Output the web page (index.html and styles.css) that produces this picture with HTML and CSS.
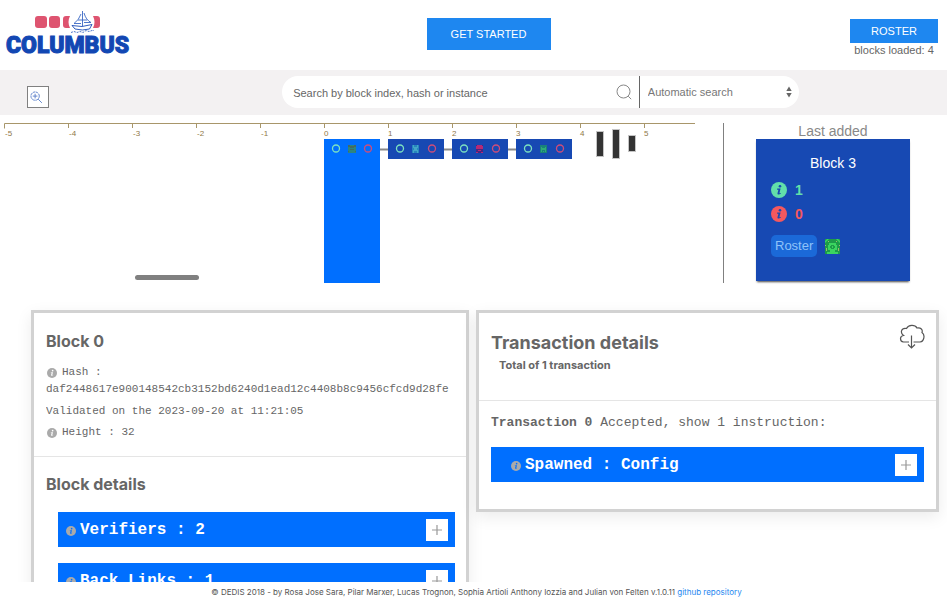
FILE: index.html
```html
<!DOCTYPE html>
<html lang="en">
<head>
<meta charset="utf-8">
<title>Columbus</title>
<link rel="stylesheet" href="styles.css">
</head>
<body>
<svg class="defs" aria-hidden="true">
  <symbol id="info" viewBox="0 0 16 16">
    <circle cx="8" cy="8" r="8" fill="currentColor"/>
    <circle class="info-mark" cx="9" cy="4.2" r="1.3"/>
    <path class="info-mark" d="M6.2 6.600h3.400l-1.200 4.700 1.500-.4-.2.8c-1 .7-3.600 1.300-3.200-.5l.9-3.500H6z"/>
  </symbol>
  <symbol id="plus" viewBox="0 0 12 12">
    <path d="M6 1v10M1 6h10" fill="none" stroke="currentColor" stroke-width="1.2"/>
  </symbol>
</svg>

<header class="topbar">
  <a class="logo" href="#" aria-label="Columbus">
    <svg class="logo-art" viewBox="0 0 120 24" aria-hidden="true">
      <g fill="#de5470">
        <rect x="29" y="6" width="12" height="12" rx="3"/>
        <rect x="43" y="6" width="11" height="12" rx="3"/>
        <path d="M64 6h-4q-3 0-3 3v6q0 3 3 3h4q-3-6 0-12z"/>
        <path d="M87 6h4q3 0 3 3v6q0 3-3 3h-4q3-6 0-12z"/>
      </g>
      <g fill="none" stroke="#3a68c4" stroke-width=".9">
        <path d="M76.500 1v15M75 4q-2 6-7 9.500h7M78 3q2 7 7 9.500h-7M72 10h9"/>
        <path d="M66 15.500q10 2.500 20-1l-2.500 4.500q-7 2-14.500 0z" stroke="#1a4bb5"/>
        <path d="M65 22.500l3-1 3 1 3-1 3 1 3-2 3 1 3-1 2 0" stroke-dasharray="2 1"/>
      </g>
    </svg>
    <span class="logo-text">COLUMBUS</span>
  </a>
  <button class="btn btn-start" type="button">GET STARTED</button>
  <div class="status">
    <button class="btn btn-roster" type="button">ROSTER</button>
    <span class="loaded">blocks loaded: 4</span>
  </div>
</header>

<section class="toolbar">
  <div class="tools">
    <button class="zoom-btn" type="button" aria-label="Zoom in">
      <svg viewBox="0 0 14 14" fill="none" stroke="#5b7fca">
        <circle cx="5.500" cy="5.500" r="4.500" stroke-dasharray="3 .6"/>
        <path d="M5.500 3v5M3 5.500h5M8.800 8.800l4 4"/>
      </svg>
    </button>
  </div>
  <form class="search">
    <input class="search-input" type="search" aria-label="Search" placeholder="Search by block index, hash or instance">
    <button class="search-btn" type="button" aria-label="Search">
      <svg viewBox="0 0 16 16" fill="none" stroke="#888">
        <circle cx="7.500" cy="7.500" r="6.500"/><path d="M12.200 12.200l3 3"/>
      </svg>
    </button>
    <div class="select-wrap">
      <select class="search-mode" aria-label="Search mode"><option>Automatic search</option></select>
      <svg class="arrows" viewBox="0 0 6 12" fill="#666" aria-hidden="true"><path d="M3 .5l2.700 4.500H.3zM3 11.500L.3 7h5.400z"/></svg>
    </div>
  </form>
</section>

<section class="chain">
  <div class="chart">
    <svg class="chart-svg" width="695" height="160" viewBox="0 0 695 160" role="img" aria-label="Block chain">
      <path class="axis" d="M4.500 5.500v-5H695M68.500 0v5M132.500 0v5M196.500 0v5M260.500 0v5M324.500 0v5M388.500 0v5M452.500 0v5M516.500 0v5M580.500 0v5M644.500 0v5"/>
      <g class="ticks">
        <text x="5" y="13">-5</text><text x="69" y="13">-4</text><text x="133" y="13">-3</text><text x="197" y="13">-2</text><text x="261" y="13">-1</text>
        <text x="324" y="13">0</text><text x="388" y="13">1</text><text x="452" y="13">2</text><text x="516" y="13">3</text><text x="580" y="13">4</text><text x="644" y="13">5</text>
      </g>
      <path d="M380 26.500h136" stroke="#888" stroke-width="2"/>
      <rect x="324" y="16" width="56" height="144" fill="#006fff"/>
      <g fill="#1749b3">
        <rect x="388" y="16" width="56" height="20"/><rect x="452" y="16" width="56" height="20"/><rect x="516" y="16" width="56" height="20"/>
      </g>
      <g fill="none" stroke="#7de3c0" stroke-width="1.300">
        <circle cx="336" cy="25.500" r="3.500"/><circle cx="400" cy="25.500" r="3.500"/><circle cx="464" cy="25.500" r="3.500"/><circle cx="528" cy="25.500" r="3.500"/>
      </g>
      <g fill="none" stroke="#cf4d79" stroke-width="1.300">
        <circle cx="368" cy="25.500" r="3.500"/><circle cx="432" cy="25.500" r="3.500"/><circle cx="496" cy="25.500" r="3.500"/><circle cx="560" cy="25.500" r="3.500"/>
      </g>
      <g>
        <rect x="348" y="22" width="8" height="8" fill="#2d867f"/>
        <path d="M348 22h2v1h4v-1h2v2h-2v1h-4v-1h-2zM350 26h4v1h-4zM348 28h1v1h-1zM355 28h1v1h-1z" fill="#456a63"/>
        <rect x="412" y="22" width="7" height="8" fill="#2785bd"/>
        <path d="M413 22h1v2h3v-2h1v3h-1v2h1v3h-1v-2h-3v2h-1v-3h1v-2h-1z" fill="#43a5c8"/>
        <rect x="476" y="22" width="7" height="8" fill="#4b257f"/>
        <path d="M477 22h5v1h1v3h-7v-3h1zM478 27h3v1h-3zM476 29h2v1h-2zM481 29h2v1h-2z" fill="#b52a75"/>
        <rect x="540" y="22" width="7" height="8" fill="#198278"/>
        <path d="M541 24h1v1h3v-1h1v5h-1v-2h-3v2h-1zM543 28h1v1h-1z" fill="#2fab78"/>
      </g>
      <g fill="#333" stroke="#c4c4c4">
        <rect x="596.500" y="8.500" width="7" height="25"/><rect x="612.500" y="6.500" width="7" height="29"/><rect x="628.500" y="12.500" width="7" height="16"/>
      </g>
      <rect x="135" y="152" width="64" height="5" rx="2.500" fill="#808080"/>
    </svg>
  </div>
  <aside class="last">
    <div class="last-label">Last added</div>
    <div class="last-card">
      <div class="last-title">Block 3</div>
      <div class="count accepted"><svg class="info-lg"><use href="#info"/></svg>1</div>
      <div class="count rejected"><svg class="info-lg"><use href="#info"/></svg>0</div>
      <div class="roster-row">
        <span class="roster-tag">Roster</span>
        <svg class="identicon" viewBox="0 0 15 15" aria-hidden="true">
          <rect width="15" height="15" fill="#1d9b48"/>
          <path d="M4 4h7v2h1v5h-2v2h3v2H2v-2h3v-2H3V6h1z" fill="#3bd45f"/>
          <path d="M6 6h3v1h1v2H9v1H6V9H5V7h1z" fill="#1d9b48"/><path d="M7 7h1v2H7z" fill="#3bd45f"/>
          <path d="M0 2l2-2h2L0 4zM15 2l-2-2h-2l4 4z" fill="#3bd45f"/>
          <path d="M3 2h1v1H3zM11 2h1v1h-1zM0 6h1v1H0zM14 6h1v1h-1zM1 9h1v3H1zM13 9h1v3h-1z" fill="#9cba6c"/>
        </svg>
      </div>
    </div>
  </aside>
</section>

<main class="panels">
  <article class="panel">
    <section class="summary">
      <h2 class="heading">Block 0</h2>
      <p class="line hash-label"><svg class="info-sm"><use href="#info"/></svg>Hash :</p>
      <p class="line hash">daf2448617e900148542cb3152bd6240d1ead12c4408b8c9456cfcd9d28fe</p>
      <p class="line">Validated on the 2023-09-20 at 11:21:05</p>
      <p class="line"><svg class="info-sm"><use href="#info"/></svg>Height : 32</p>
    </section>
    <section class="details">
      <h2 class="heading">Block details</h2>
      <div class="accordion">
        <div class="bar"><svg class="info-sm"><use href="#info"/></svg>Verifiers : 2<button class="expand" type="button" aria-label="Expand verifiers"><svg><use href="#plus"/></svg></button></div>
        <div class="bar"><svg class="info-sm"><use href="#info"/></svg>Back Links : 1<button class="expand" type="button" aria-label="Expand back links"><svg><use href="#plus"/></svg></button></div>
      </div>
    </section>
  </article>

  <article class="panel">
    <section class="tx-head">
      <div>
        <h2 class="heading heading-lg">Transaction details</h2>
        <p class="total">Total of 1 transaction</p>
      </div>
      <button class="download" type="button" aria-label="Download">
        <svg viewBox="0 0 26 26" fill="none" stroke="#555" stroke-width="1.200">
          <path d="M10 18H4.500C.5 17.500.5 12 4.500 11.500 1 9 2 3.500 7.500 4.500 9.500.5 16 .5 18 4c4-.5 6 1.500 5 4.500 3.500 2.500 2 9-2 9.500h-6.500"/>
          <path d="M12.500 11.500v12M9 20.500l3.500 3.500 3.500-3.500"/>
        </svg>
      </button>
    </section>
    <section class="tx-body">
      <p class="tx-line"><b>Transaction 0</b> Accepted, show 1 instruction:</p>
      <div class="bar bar-indent"><svg class="info-sm"><use href="#info"/></svg>Spawned : Config<button class="expand" type="button" aria-label="Expand instruction"><svg><use href="#plus"/></svg></button></div>
    </section>
  </article>
</main>

<footer class="footer">© DEDIS 2018 - by Rosa Jose Sara, Pilar Marxer, Lucas Trognon, Sophia Artioli Anthony Iozzia and Julian von Felten v.1.0.11 <a href="#">github repository</a></footer>
</body>
</html>
```
FILE: styles.css
```css
* { box-sizing: border-box; }

body {
  margin: 0;
  height: 100vh;
  display: flex;
  flex-direction: column;
  overflow: hidden;
  background: #fff;
  color: #666;
  font-family: "Liberation Sans", Arial, sans-serif;
}

h2, p { margin: 0; }
button { font: inherit; cursor: pointer; padding: 0; }
.defs { display: none; }

/* Header */
.topbar {
  flex: none;
  height: 70px;
  display: flex;
  justify-content: space-between;
  padding: 0 9px 0 6px;
}

.logo {
  display: flex;
  flex-direction: column;
  width: 121px;
  padding-top: 10px;
  color: #1247b3;
  text-decoration: none;
}
.logo-art { height: 24px; width: 120px; }
.logo-text {
  font: 900 23px/23px Roboto, sans-serif;
  -webkit-text-stroke: 1px #1247b3;
}

.btn {
  border: 0;
  background: #1e87f0;
  color: #fff;
  font-size: 11px;
}
.btn-start { width: 124px; height: 32px; margin-top: 18px; }
.btn-roster { width: 88px; height: 24px; }
.status {
  display: flex;
  flex-direction: column;
  align-items: center;
  padding-top: 19px;
}
.loaded { font-size: 11px; line-height: 14px; }

/* Search strip */
.toolbar {
  flex: none;
  height: 45px;
  display: grid;
  grid-template-columns: 19fr 35fr 10fr;
  background: #f3f1f2;
}
.tools { padding: 16px 0 0 27px; }
.zoom-btn {
  display: block;
  width: 22px;
  height: 22px;
  padding: 3px 2px;
  border: 1px solid #808080;
  background: #fff;
}
.zoom-btn svg { display: block; width: 13px; height: 13px; }

.search {
  display: flex;
  height: 32px;
  margin: 6px 0 0 1px;
  border-radius: 16px;
  background: #fff;
  overflow: hidden;
}
.search-input {
  flex: 1;
  min-width: 0;
  padding: 2px 0 0 11px;
  border: 0;
  background: none;
  font: 11px "Liberation Sans", Arial, sans-serif;
  color: #666;
}
.search-input::placeholder { color: #666; }
.search-btn {
  width: 30px;
  border: 0;
  background: none;
  color: #888;
}
.search-btn svg { display: block; width: 16px; height: 16px; margin: 0 auto; }
.select-wrap {
  display: flex;
  align-items: center;
  width: 31%;
  padding-right: 7px;
  border-left: 1px solid #666;
}
.search-mode {
  flex: 1;
  min-width: 0;
  height: 32px;
  padding: 0 8px;
  appearance: none;
  border: 0;
  background: none;
  color: #777;
  font: 11px "Liberation Sans", Arial, sans-serif;
}
.arrows { width: 6px; height: 12px; }

/* Block chain */
.chain {
  flex: none;
  display: flex;
  justify-content: space-between;
  padding: 8px 37px 27px 0;
}
.chart {
  flex: 1;
  height: 160px;
  margin-right: 32px;
  border-right: 1px solid #808080;
}
.chart-svg { display: block; }
.axis { fill: none; stroke: #a8966a; }
.ticks {
  fill: #8f7848;
  font: 8px "Liberation Sans", Arial, sans-serif;
}

.last { width: 154px; }
.last-label {
  height: 16px;
  color: #888;
  font-size: 14px;
  line-height: 16px;
  text-align: center;
}
.last-card {
  height: 142px;
  padding: 16px 15px;
  background: #1749b3;
  box-shadow: 0 2px 2px -1px #444;
}
.last-title {
  color: #fff;
  font-size: 14px;
  line-height: 16px;
  text-align: center;
  margin-bottom: 7px;
}
.count {
  display: flex;
  align-items: center;
  gap: 8px;
  height: 24px;
  font-size: 14px;
  font-weight: bold;
}
.accepted { color: #62dfaa; }
.rejected { color: #f4585e; }
.info-lg { width: 16px; height: 16px; fill: #1749b3; }
.roster-row {
  display: flex;
  align-items: center;
  gap: 8px;
  margin-top: 9px;
}
.roster-tag {
  padding: 0 4px;
  border-radius: 5px;
  background: #1b69d8;
  color: #8fc3f8;
  font-size: 13px;
  line-height: 22px;
}
.identicon { width: 15px; height: 15px; }

/* Panels */
.panels {
  flex: 1;
  min-height: 0;
  display: grid;
  grid-template-columns: 438fr 463fr;
  align-items: start;
  gap: 7px;
  margin-top: -10px;
  padding: 10px 8px 0 31px;
  overflow: hidden;
}
.panel {
  min-width: 0;
  border: 3px solid #d2d2d2;
  box-shadow: 0 5px 15px rgba(0, 0, 0, 0.08);
  background: #fff;
}

.heading {
  font: 700 16px/24px Inter, sans-serif;
  color: #666;
}
.heading-lg { font-size: 18px; }

.summary {
  padding: 16px 12px 13px;
  border-bottom: 1px solid #e5e5e5;
}
.line {
  display: flex;
  align-items: center;
  height: 21px;
  overflow: hidden;
  white-space: nowrap;
  font: 11px/21px "Liberation Mono", monospace;
}
.hash-label { height: 17px; margin-top: 11px; }
.hash { height: 17px; margin-bottom: 3px; }
.info-sm {
  flex: none;
  width: 10px;
  height: 10px;
  margin: 1px 5px 0 1px;
  color: #aaa;
  fill: #fff;
}

.details { padding: 15px 11px 15px 12px; }
.accordion {
  display: grid;
  gap: 16px;
  margin: 16px 0 0 12px;
}
.bar {
  display: flex;
  align-items: center;
  height: 35px;
  padding: 0 7px 0 8px;
  background: #006fff;
  color: #fff;
  font: bold 16px "Liberation Mono", monospace;
  white-space: nowrap;
}
.bar .info-sm { margin: 3px 4px 0 0; fill: #006fff; }
.bar-indent { padding-left: 20px; }
.expand {
  width: 22px;
  height: 22px;
  margin-left: auto;
  border: 0;
  background: #fff;
  color: #999;
}
.expand svg { display: block; width: 12px; height: 12px; margin: 0 auto; }

.tx-head {
  display: flex;
  justify-content: space-between;
  height: 88px;
  padding: 18px 11px 0 12px;
  border-bottom: 1px solid #e5e5e5;
}
.total {
  padding-left: 8px;
  font: 700 11px/20px Inter, sans-serif;
}
.download {
  width: 26px;
  height: 26px;
  margin-top: -7px;
  border: 0;
  background: none;
}
.download svg { display: block; width: 26px; height: 26px; }
.tx-body { padding: 12px 12px 27px; }
.tx-line {
  margin-bottom: 14px;
  font: 13px/20px "Liberation Mono", monospace;
}

/* Footer */
.footer {
  flex: none;
  height: 17px;
  padding-left: 6px;
  text-align: center;
  font: 8px/20px Inter, sans-serif;
  color: #555;
}
.footer a { color: #1e87f0; text-decoration: none; }
```
